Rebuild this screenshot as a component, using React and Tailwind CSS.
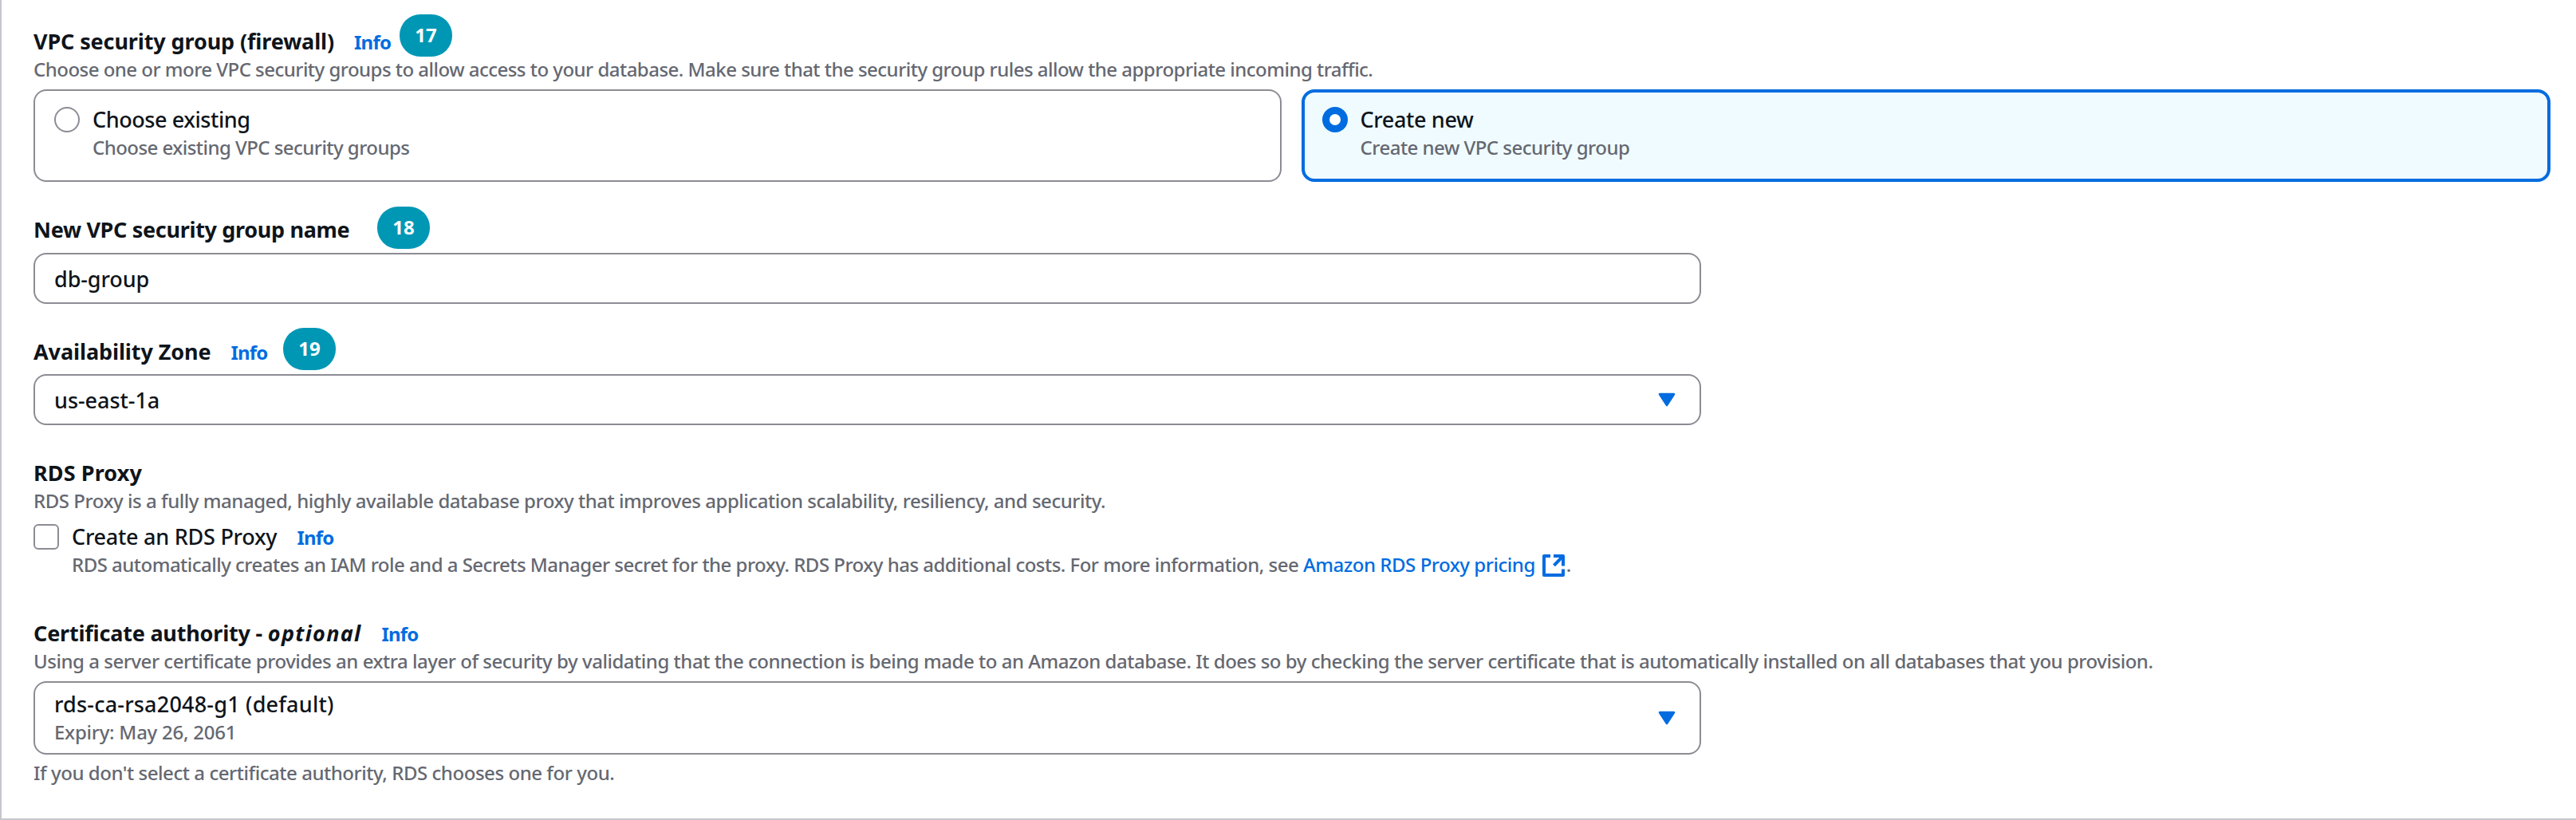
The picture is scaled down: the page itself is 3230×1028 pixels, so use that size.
function Title({ children, className = "" }) {
  return (
    <span className={`text-[27px] font-bold leading-[33px] text-[#0f141a] ${className}`}>{children}</span>
  );
}

function Info() {
  return (
    <a className="ml-[25px] text-2xl font-bold leading-[33px] tracking-[-0.8px] text-[#006ce0]">Info</a>
  );
}

function Badge({ children, className }) {
  return (
    <span
      className={`absolute flex h-[53px] w-[66px] items-center justify-center rounded-[26px] bg-[#0097b5] pb-0.5 text-2xl font-bold leading-[33px] text-white ${className}`}
    >
      {children}
    </span>
  );
}

function Note({ children, className = "" }) {
  return <p className={`text-2xl font-medium leading-[33px] text-[#656871] ${className}`}>{children}</p>;
}

function Caret() {
  return (
    <svg className="mr-[30px] h-[18px] w-[22px] shrink-0" viewBox="0 0 22 18">
      <path
        d="M2.2 2.2H19.8L11 15.8Z"
        fill="#006ce0"
        stroke="#006ce0"
        strokeWidth="3"
        strokeLinejoin="round"
      />
    </svg>
  );
}

function ExternalIcon() {
  return (
    <svg
      className="mb-[-6px] ml-[9px] mr-0.5 inline-block h-7 w-7 align-baseline"
      viewBox="0 0 28 28"
      fill="none"
      stroke="#006ce0"
      strokeWidth="4"
    >
      <path d="M10 2H2v24h24v-7.5" strokeLinejoin="round" />
      <path d="M14 2h12v12.5M26 2 14.5 13.8" strokeLinejoin="round" />
    </svg>
  );
}

function Tile({ selected, label, note, labelClass, noteClass }) {
  return (
    <div
      className={
        selected
          ? "flex h-[116px] flex-1 gap-4 rounded-2xl border-4 border-[#006ce0] bg-[#f0fbff] pl-[22px] pt-[17px]"
          : "flex h-[116px] flex-1 gap-4 rounded-2xl border-2 border-[#8c8c94] bg-white pl-6 pt-[19px]"
      }
    >
      <span
        className={
          selected
            ? "mt-px h-8 w-8 shrink-0 rounded-full border-[9px] border-[#006ce0] bg-white"
            : "mt-px h-8 w-8 shrink-0 rounded-full border-2 border-[#8c8c94] bg-white"
        }
      />
      <div className="flex flex-col gap-0.5">
        <p className={`text-[27px] font-medium leading-[33px] text-[#0f141a] ${labelClass}`}>{label}</p>
        <Note className={noteClass}>{note}</Note>
      </div>
    </div>
  );
}

const box = "flex w-[2091px] items-center justify-between rounded-2xl border-2 border-[#8c8c94] bg-white pl-6";
const value = "text-[27px] font-medium leading-[33px] text-[#0f141a]";

export default function App() {
  return (
    <main className="flex h-[1028px] w-[3230px] flex-col overflow-hidden whitespace-nowrap border-b-2 border-l-2 border-[#c6c6cd] bg-white pl-10 pr-8 pt-[35px] font-['Noto_Sans',sans-serif]">
      <section>
        <div className="relative flex h-[33px] items-baseline">
          <Title className="tracking-[-0.12px]">VPC security group (firewall)</Title>
          <Info />
          <Badge className="left-[459px] top-[-17px]">17</Badge>
        </div>
        <Note className="mt-0.5 tracking-[-0.52px]">
          Choose one or more VPC security groups to allow access to your database. Make sure that the security group
          rules allow the appropriate incoming traffic.
        </Note>
        <div className="mt-[9px] flex gap-[25px]">
          <Tile
            label="Choose existing"
            note="Choose existing VPC security groups"
            labelClass="tracking-[-0.43px]"
            noteClass="tracking-[-0.54px]"
          />
          <Tile
            selected
            label="Create new"
            note="Create new VPC security group"
            labelClass="tracking-[-0.36px]"
            noteClass="tracking-[-0.51px]"
          />
        </div>
      </section>

      <section className="mt-[43px]">
        <div className="relative flex h-[33px] items-baseline">
          <Title className="tracking-[-0.32px]">New VPC security group name</Title>
          <Badge className="left-[431px] top-[-12px]">18</Badge>
        </div>
        <div className={`mt-[13px] h-16 ${box}`}>
          <span className={`tracking-[-0.1px] ${value}`}>db-group</span>
        </div>
      </section>

      <section className="mt-[43px]">
        <div className="relative flex h-[33px] items-baseline">
          <Title className="tracking-[-0.1px]">Availability Zone</Title>
          <Info />
          <Badge className="left-[313px] top-[-13px]">19</Badge>
        </div>
        <div className={`mt-3 h-16 ${box}`}>
          <span className={`tracking-[-0.05px] ${value}`}>us-east-1a</span>
          <Caret />
        </div>
      </section>

      <section className="mt-[43px]">
        <div className="flex h-[33px] items-baseline">
          <Title className="tracking-[0.1px]">RDS Proxy</Title>
        </div>
        <Note className="mt-0.5 tracking-[-0.46px]">
          RDS Proxy is a fully managed, highly available database proxy that improves application scalability,
          resiliency, and security.
        </Note>
        <div className="mt-3 flex gap-4">
          <span className="mt-px h-8 w-8 shrink-0 rounded-md border-2 border-[#8c8c94] bg-white" />
          <div>
            <div className="flex h-[33px] items-baseline">
              <span className={`tracking-[-0.25px] ${value}`}>Create an RDS Proxy</span>
              <Info />
            </div>
            <Note className="mt-0.5 h-[33px] tracking-[-0.515px]">
              RDS automatically creates an IAM role and a Secrets Manager secret for the proxy. RDS Proxy has
              additional costs. For more information, see{" "}
              <a className="tracking-[-0.46px] text-[#006ce0]">
                Amazon RDS Proxy pricing
                <ExternalIcon />
              </a>
              .
            </Note>
          </div>
        </div>
      </section>

      <section className="mt-[53px]">
        <div className="flex h-[33px] items-baseline">
          <Title className="tracking-[-0.2px]">
            Certificate authority - <i className="tracking-[1.3px]">optional</i>
          </Title>
          <Info />
        </div>
        <Note className="mt-0.5 tracking-[-0.47px]">
          Using a server certificate provides an extra layer of security by validating that the connection is being
          made to an Amazon database. It does so by checking the server certificate that is automatically installed on
          all databases that you provision.
        </Note>
        <div className={`mt-[9px] h-[92px] ${box}`}>
          <div className="flex flex-col gap-0.5">
            <span className={`tracking-[0.2px] ${value}`}>rds-ca-rsa2048-g1 (default)</span>
            <Note className="tracking-[-0.25px]">Expiry: May 26, 2061</Note>
          </div>
          <Caret />
        </div>
        <Note className="mt-1.5 tracking-[-0.45px]">
          If you don't select a certificate authority, RDS chooses one for you.
        </Note>
      </section>
    </main>
  );
}
